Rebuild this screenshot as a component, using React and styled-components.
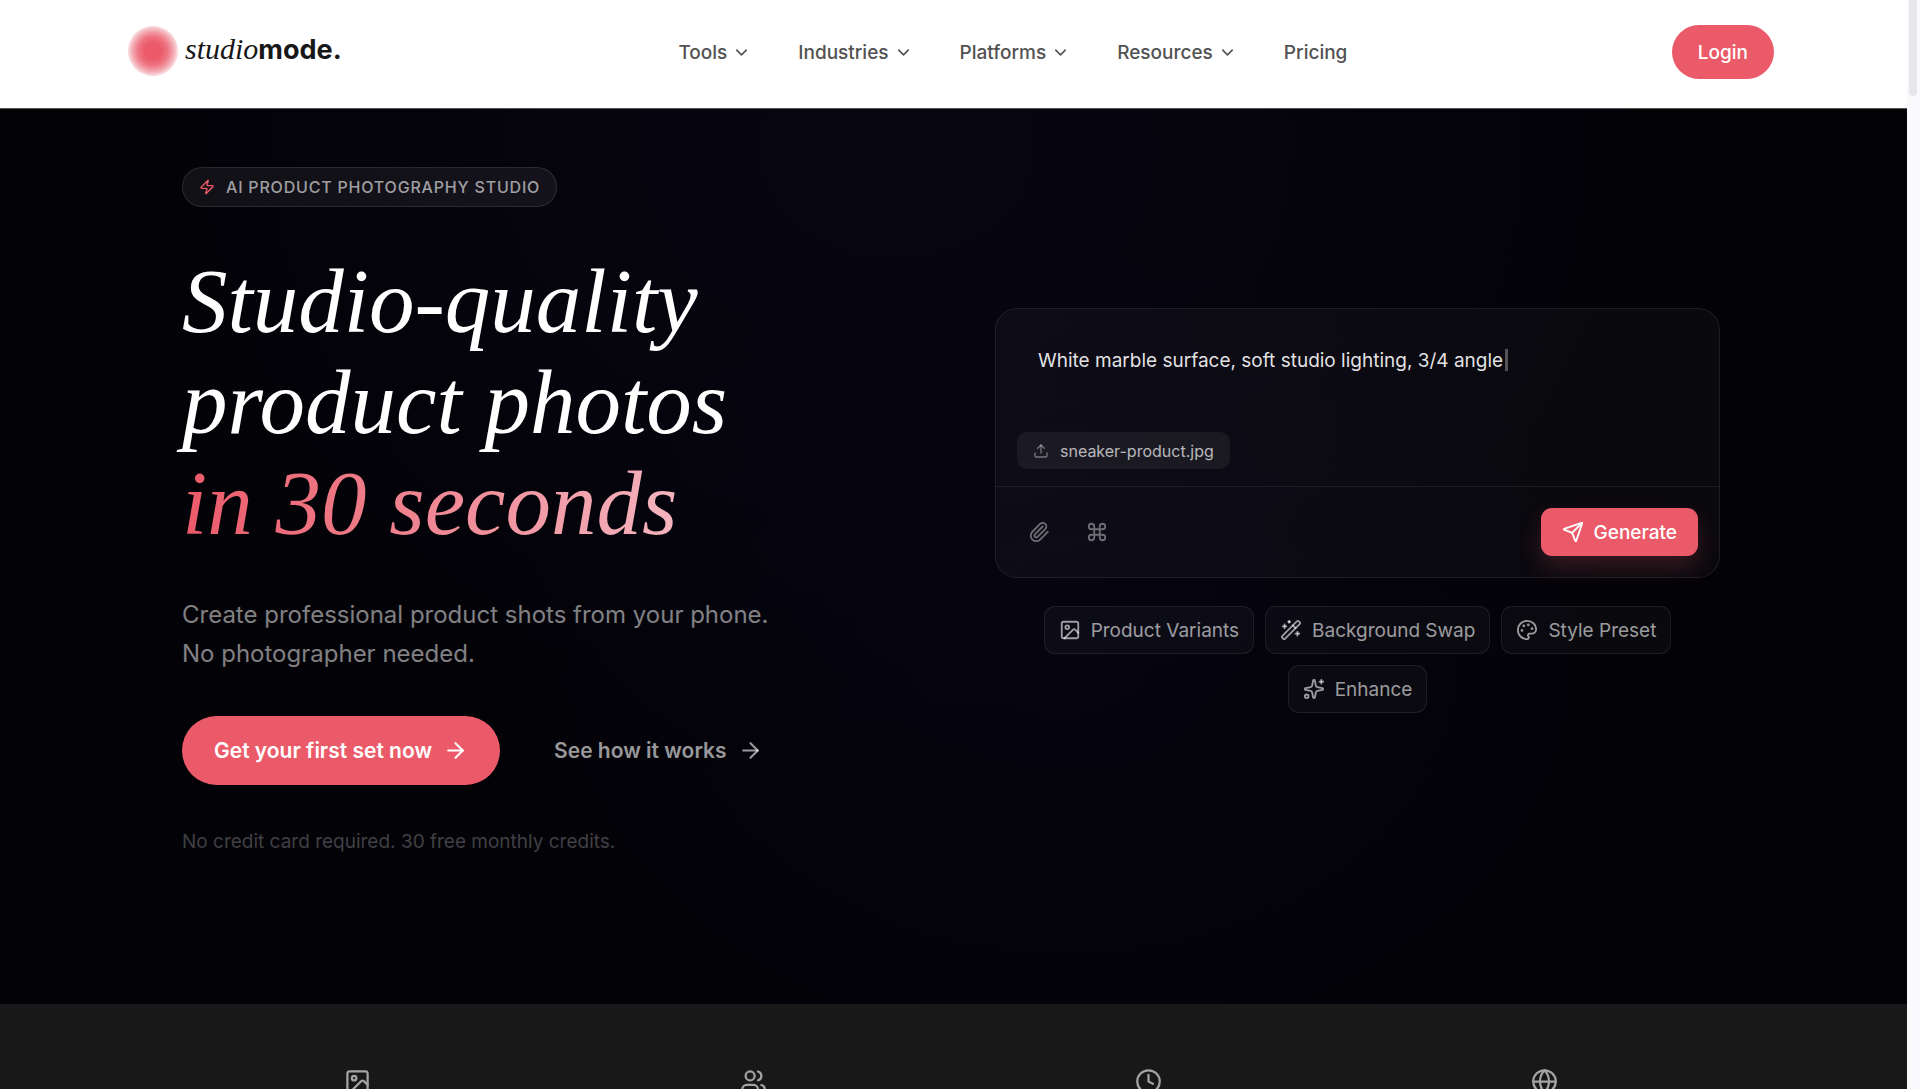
import React from 'react';
import styled, { createGlobalStyle, css, ThemeProvider } from 'styled-components';
import {
  ArrowRight,
  ChevronDown,
  Clock,
  Command,
  Globe,
  Image,
  Palette,
  Paperclip,
  Send,
  Sparkles,
  Upload,
  Users,
  WandSparkles,
  Zap,
} from 'lucide-react';

const theme = {
  coral: '#eb5a69',
  ink: '#171717',
  navText: '#525252',
  night: '#030207',
  panel: '#181818',
  line: 'rgba(255, 255, 255, 0.08)',
  soft: 'rgba(255, 255, 255, 0.6)',
  sans: "Inter, 'Liberation Sans', sans-serif",
  serif: "'Liberation Serif', serif",
  fontSmall: '16px',
  fontBase: '19px',
};

const MENUS = ['Tools', 'Industries', 'Platforms', 'Resources'];

const CHIPS = [
  { label: 'Product Variants', Icon: Image },
  { label: 'Background Swap', Icon: WandSparkles },
  { label: 'Style Preset', Icon: Palette },
  { label: 'Enhance', Icon: Sparkles },
];

const STATS = [Image, Users, Clock, Globe];

const Header = () => {
  return (
    <HeaderWrap>
      <HeaderInner>
        <Logo href="#">
          <LogoMark viewBox="0 0 50 50">
            <circle cx="25" cy="25" r="25" fill="#f9d3d8" />
            <circle cx="25" cy="25" r="23" fill="#f5b9c0" />
            <circle cx="25" cy="25" r="21" fill="#f3a5ae" />
            <circle cx="25" cy="25" r="19" fill="#f1929d" />
            <circle cx="25" cy="25" r="17" fill="#ef808d" />
            <circle cx="25" cy="25" r="15" fill="#ee707e" />
            <circle cx="25" cy="25" r="12" fill="#ec6473" />
            <circle cx="25" cy="25" r="9" fill="#eb5a69" />
          </LogoMark>
          <LogoText>
            <LogoItalic>studio</LogoItalic>
            <LogoBold>mode.</LogoBold>
          </LogoText>
        </Logo>

        <Nav>
          {MENUS.map(menu => (
            <NavButton key={menu} type="button">
              {menu}
              <ChevronDown size={19} />
            </NavButton>
          ))}
          <a href="#">Pricing</a>
        </Nav>

        <LoginButton type="button">Login</LoginButton>
      </HeaderInner>
    </HeaderWrap>
  );
};

const PromptCard = () => {
  return (
    <Card>
      <CardBody>
        <PromptLine>
          <PromptInput
            type="text"
            aria-label="Prompt"
            defaultValue="White marble surface, soft studio lighting, 3/4 angle"
          />
          <Caret />
        </PromptLine>
        <FileTag>
          <Upload size={16} />
          <span>sneaker-product.jpg</span>
        </FileTag>
      </CardBody>
      <CardFooter>
        <Tools>
          <IconButton type="button" aria-label="Attach">
            <Paperclip size={22} />
          </IconButton>
          <IconButton type="button" aria-label="Commands">
            <Command size={22} />
          </IconButton>
        </Tools>
        <GenerateButton type="button">
          <Send size={22} />
          Generate
        </GenerateButton>
      </CardFooter>
    </Card>
  );
};

const Hero = () => {
  return (
    <HeroWrap>
      <HeroInner>
        <div>
          <Badge>
            <Zap size={16} />
            <span>AI PRODUCT PHOTOGRAPHY STUDIO</span>
          </Badge>
          <Title>
            Studio-quality
            <br />
            product photos
            <br />
            <TitleAccent>in 30 seconds</TitleAccent>
          </Title>
          <Lead>
            Create professional product shots from your phone.
            <br />
            No photographer needed.
          </Lead>
          <Actions>
            <ActionLink href="#" $primary>
              Get your first set now
              <ArrowRight size={25} />
            </ActionLink>
            <ActionLink href="#">
              See how it works
              <ArrowRight size={25} />
            </ActionLink>
          </Actions>
          <Note>No credit card required. 30 free monthly credits.</Note>
        </div>

        <Demo>
          <PromptCard />
          <Chips>
            {CHIPS.map(({ label, Icon }) => (
              <Chip key={label} type="button">
                <Icon size={22} />
                {label}
              </Chip>
            ))}
          </Chips>
        </Demo>
      </HeroInner>
    </HeroWrap>
  );
};

const App = () => {
  return (
    <ThemeProvider theme={theme}>
      <GlobalStyle />
      <Shell>
        <Page>
          <Header />
          <Hero />
          <Stats>
            <StatsInner>
              {STATS.map((Icon, index) => (
                <Stat key={index}>
                  <Icon size={27} />
                </Stat>
              ))}
            </StatsInner>
          </Stats>
        </Page>
        <ScrollTrack>
          <ScrollThumb />
        </ScrollTrack>
      </Shell>
    </ThemeProvider>
  );
};

export default App;

const GlobalStyle = createGlobalStyle`
  * {
    box-sizing: border-box;
  }

  body {
    margin: 0;
    font-family: ${theme.sans};
    font-size: ${theme.fontBase};
    -webkit-font-smoothing: antialiased;
  }

  button,
  input {
    font: inherit;
    color: inherit;
    border: 0;
    padding: 0;
    background: none;
  }

  a {
    color: inherit;
    text-decoration: none;
  }

  svg {
    flex-shrink: 0;
  }
`;

const Shell = styled.div`
  display: grid;
  grid-template-columns: minmax(0, 1fr) 13px;
  height: 100vh;
`;

const Page = styled.div`
  display: flex;
  flex-direction: column;
  overflow: hidden;
  background: ${props => props.theme.panel};
`;

const ScrollTrack = styled.div`
  padding: 0 3px 0 2px;
  background: #fafafc;
`;

const ScrollThumb = styled.div`
  height: 96px;
  border-radius: 0 0 4px 4px;
  background: #e5e7eb;
`;

const HeaderWrap = styled.header`
  flex-shrink: 0;
  padding-right: 5px;
  background: #fff;
`;

const HeaderInner = styled.div`
  display: flex;
  align-items: center;
  justify-content: space-between;
  max-width: 1646px;
  height: 108px;
  margin: 0 auto;
  padding-bottom: 4px;
`;

const Logo = styled.a`
  display: flex;
  align-items: center;
  gap: 7px;
  width: 226px;
  padding-bottom: 2px;
`;

const LogoMark = styled.svg`
  width: 50px;
  height: 50px;
`;

const LogoText = styled.span`
  display: flex;
  align-items: baseline;
  padding-bottom: 4px;
  color: ${props => props.theme.ink};
`;

const LogoItalic = styled.span`
  font-family: ${props => props.theme.serif};
  font-size: 30px;
  font-style: italic;
`;

const LogoBold = styled.span`
  font-size: 27px;
  font-weight: 700;
`;

const Nav = styled.nav`
  display: flex;
  align-items: center;
  gap: 47px;
  color: ${props => props.theme.navText};
  font-weight: 500;
`;

const NavButton = styled.button`
  display: flex;
  align-items: center;
  gap: 5px;
`;

const LoginButton = styled.button`
  height: 54px;
  padding: 0 26px;
  border-radius: 27px;
  background: ${props => props.theme.coral};
  color: #fff;
  font-weight: 500;
`;

const HeroWrap = styled.section`
  flex-shrink: 0;
  padding: 58px 5px 148px 0;
  border-top: 1px solid #555;
  background:
    radial-gradient(ellipse 760px 620px at 47% 4%, rgba(50, 40, 110, 0.1), transparent),
    radial-gradient(ellipse 560px 420px at 56% 62%, rgba(20, 30, 110, 0.08), transparent),
    ${props => props.theme.night};
`;

const HeroInner = styled.div`
  display: grid;
  grid-template-columns: 1fr 1fr;
  align-items: center;
  gap: 88px;
  max-width: 1538px;
  margin: 0 auto;
`;

const Demo = styled.div`
  padding-bottom: 2px;
`;

const Badge = styled.div`
  display: inline-flex;
  align-items: center;
  gap: 11px;
  height: 40px;
  padding: 0 16px;
  border: 1px solid rgba(255, 255, 255, 0.1);
  border-radius: 20px;
  background: rgba(255, 255, 255, 0.06);
  color: ${props => props.theme.soft};
  font-size: ${props => props.theme.fontSmall};
  font-weight: 500;
  letter-spacing: 0.05em;
  vertical-align: top;

  svg {
    color: ${props => props.theme.coral};
  }
`;

const Title = styled.h1`
  margin: 44px 0 41px;
  color: #fff;
  font-family: ${props => props.theme.serif};
  font-size: 91px;
  font-style: italic;
  font-weight: 400;
  line-height: 101px;
`;

const TitleAccent = styled.span`
  background: linear-gradient(90deg, #eb5a69, #f4b4be);
  background-clip: text;
  color: transparent;
`;

const Lead = styled.p`
  margin: 0 0 43px;
  color: rgba(255, 255, 255, 0.5);
  font-size: 24px;
  line-height: 39px;
`;

const Actions = styled.div`
  display: flex;
  gap: 22px;
`;

const ActionLink = styled.a`
  display: flex;
  align-items: center;
  gap: 11px;
  height: 69px;
  padding: 0 32px;
  border-radius: 35px;
  color: ${props => props.theme.soft};
  font-size: 21px;
  font-weight: 600;

  ${props =>
    props.$primary &&
    css`
      background: ${props.theme.coral};
      color: #fff;
    `}
`;

const Note = styled.p`
  margin: 43px 0 0;
  color: rgba(255, 255, 255, 0.25);
  line-height: 28px;
`;

const Card = styled.div`
  border: 1px solid ${props => props.theme.line};
  border-radius: 22px;
  background: rgba(255, 255, 255, 0.03);
`;

const CardBody = styled.div`
  padding: 0 21px 17px;
  border-bottom: 1px solid ${props => props.theme.line};
`;

const PromptLine = styled.div`
  display: flex;
  align-items: center;
  min-height: 123px;
  padding: 36px 21px 57px;
`;

const PromptInput = styled.input`
  field-sizing: content;
  height: 30px;
  color: rgba(255, 255, 255, 0.9);
  outline: 0;
`;

const Caret = styled.span`
  width: 3px;
  height: 22px;
  margin-left: 2px;
  background: rgba(255, 255, 255, 0.3);
`;

const FileTag = styled.div`
  display: inline-flex;
  align-items: center;
  gap: 11px;
  height: 37px;
  padding: 0 16px;
  border-radius: 10px;
  background: rgba(255, 255, 255, 0.06);
  color: rgba(255, 255, 255, 0.7);
  font-size: ${props => props.theme.fontSmall};
  vertical-align: top;

  svg {
    color: rgba(255, 255, 255, 0.4);
  }
`;

const CardFooter = styled.div`
  display: flex;
  align-items: center;
  justify-content: space-between;
  padding: 21px;
`;

const Tools = styled.div`
  display: flex;
  gap: 14px;
`;

const IconButton = styled.button`
  display: flex;
  padding: 11px;
  color: rgba(255, 255, 255, 0.4);
`;

const GenerateButton = styled.button`
  display: flex;
  align-items: center;
  gap: 10px;
  height: 48px;
  padding: 0 21px;
  border-radius: 11px;
  background: ${props => props.theme.coral};
  box-shadow: 0 11px 22px rgba(235, 90, 105, 0.2);
  color: #fff;
  font-weight: 500;
`;

const Chips = styled.div`
  display: flex;
  flex-wrap: wrap;
  justify-content: center;
  gap: 11px;
  margin-top: 28px;
  padding: 0 44px;
`;

const Chip = styled.button`
  display: flex;
  align-items: center;
  gap: 10px;
  height: 48px;
  padding: 0 14px;
  border: 1px solid ${props => props.theme.line};
  border-radius: 11px;
  background: rgba(255, 255, 255, 0.03);
  color: ${props => props.theme.soft};
`;

const Stats = styled.section`
  padding: 64px 5px 64px 0;
  background: ${props => props.theme.panel};
`;

const StatsInner = styled.div`
  display: grid;
  grid-template-columns: repeat(4, 1fr);
  gap: 44px;
  max-width: 1538px;
  margin: 0 auto;
`;

const Stat = styled.div`
  display: flex;
  justify-content: center;
  color: #a3a3a3;
`;
